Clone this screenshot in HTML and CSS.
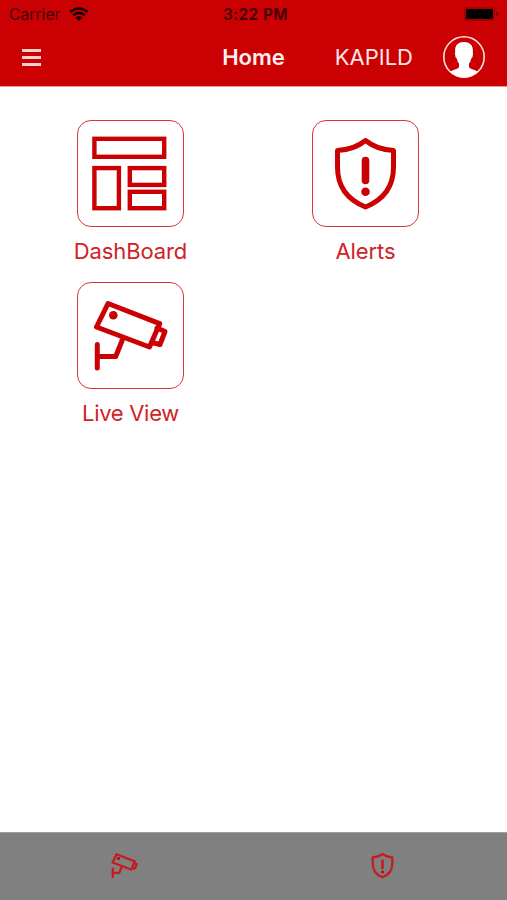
FILE: index.html
```html
<!DOCTYPE html>
<html lang="en">
<head>
    <meta charset="UTF-8">
    <meta name="viewport" content="width=device-width, initial-scale=1.0">
    <title>Home</title>
    <link rel="stylesheet" href="styles.css">
</head>

<body>
    <svg class="symbols">
        <symbol id="camera" viewBox="0 0 105 105">
            <path d="M30 20.5 81.7 40.700 71.500 64 18.500 44Z" />
            <path class="lens" d="M79 45 87 48.500 82 61.500 74 59.500" />
            <path d="M44.300 57 37.700 73.500H19.300M19.300 61.500V85" />
            <circle class="fill" cx="35.3" cy="32.3" r="4.3" />
        </symbol>
        <symbol id="shield" viewBox="0 0 105 105">
            <path d="M52.5 19.5C45 25.5 36 29 24.5 29.5V46C24.5 66 35 79 52.5 86C70 79 80.5 66 80.5 46V29.5C69 29 60 25.5 52.5 19.5Z" />
            <path class="mark" d="M52.5 39.5V59.5" />
            <circle class="fill" cx="52.5" cy="70.7" r="4.3" />
        </symbol>
    </svg>

    <header>
        <div class="status-bar">
            <div class="carrier">
                <span>Carrier</span>
                <svg class="wifi" viewBox="0 0 20 14">
                    <path d="M1.2 5Q10-2 18.8 5M4.2 8.2Q10 3.6 15.8 8.2" />
                    <path class="dot" d="M6.6 10.6Q10 8 13.4 10.6L10 14Z" />
                </svg>
            </div>
            <span class="time">3:22 PM</span>
            <div class="battery"><span></span></div>
        </div>
        <div class="nav-bar">
            <button class="menu" aria-label="Menu"><span></span><span></span><span></span></button>
            <h1>Home</h1>
            <div class="user">
                <span>KAPILD</span>
                <svg class="avatar" viewBox="0 0 42 42">
                    <circle cx="21" cy="21" r="20.2" />
                    <path d="M21 6C15 6 11.6 9.5 12.2 15.5L12 18Q12 21 13.7 22.5Q14.5 26 16 27.5V31C15 33.5 9.5 33.5 7 36A20 20 0 0 0 35 36C32.5 33.5 27 33.5 26 31V27.5Q27.5 26 28.3 22.5Q30 21 30 18L29.8 15.5C30.4 9.5 27 6 21 6Z" />
                </svg>
            </div>
        </div>
    </header>

    <main>
        <a class="tile">
            <span class="box">
                <svg class="icon square" viewBox="0 0 105 105">
                    <rect x="16.4" y="17.8" width="69.8" height="18" />
                    <rect x="16.4" y="47.1" width="24.5" height="40.1" />
                    <rect x="51.8" y="47.1" width="34.4" height="16.8" />
                    <rect x="51.8" y="70.8" width="34.4" height="16.4" />
                </svg>
            </span>
            <span class="label">DashBoard</span>
        </a>
        <a class="tile">
            <span class="box"><svg class="icon"><use href="#shield" /></svg></span>
            <span class="label">Alerts</span>
        </a>
        <a class="tile">
            <span class="box"><svg class="icon"><use href="#camera" /></svg></span>
            <span class="label live">Live View</span>
        </a>
    </main>

    <footer>
        <a><svg class="icon small"><use href="#camera" /></svg></a>
        <a><svg class="icon small"><use href="#shield" /></svg></a>
    </footer>
</body>
</html>
```
FILE: styles.css
```css
body {
    margin: 0;
    height: 100vh;
    display: flex;
    flex-direction: column;
    font-family: Inter, "Liberation Sans", sans-serif;
    background-color: #fff;
    color: #cb0003;
}

.symbols {
    position: absolute;
    width: 0;
    height: 0;
}

header {
    height: 87px;
    background-color: #cb0003;
    border-bottom: 1px solid #e69a9a;
    box-sizing: border-box;
}

.status-bar, .nav-bar {
    display: grid;
    grid-template-columns: 1fr auto 1fr;
    align-items: center;
}

.status-bar {
    height: 28px;
    padding: 0 8px 0 9px;
    font-size: 15.5px;
    color: #400000;
}

.carrier {
    display: flex;
    align-items: center;
    gap: 8px;
    letter-spacing: 0.1px;
}

.wifi {
    width: 20px;
    height: 14px;
    fill: none;
    stroke: #180000;
    stroke-width: 2.6;
}

.wifi .dot {
    fill: #180000;
    stroke: none;
}

.time {
    font-weight: 600;
    font-size: 15.5px;
    letter-spacing: 0.4px;
    padding-left: 3px;
}

.battery {
    position: relative;
    justify-self: end;
    width: 31px;
    height: 14px;
    padding: 2px;
    margin-right: 4px;
    border-radius: 3px;
    box-sizing: border-box;
    background-color: #a80002;
}

.battery span {
    display: block;
    height: 10px;
    background-color: #000;
}

.battery::after {
    content: "";
    position: absolute;
    right: -3px;
    top: 5px;
    width: 2px;
    height: 4px;
    background-color: #8c0002;
}

.nav-bar {
    height: 58px;
    padding: 0 22px;
    color: #fff;
}

.menu {
    width: 19px;
    padding: 0;
    border: none;
    background: none;
    display: grid;
    gap: 4px;
}

.menu span {
    height: 3px;
    background-color: #ffd0d0;
}

h1 {
    margin: 0;
    font-size: 22px;
    font-weight: 600;
    color: #fff0f0;
}

.user {
    display: flex;
    justify-content: flex-end;
    align-items: center;
    gap: 30px;
    font-size: 22px;
    color: #ffe6e6;
}

.avatar {
    width: 42px;
    height: 42px;
    margin-top: -1px;
    fill: #fff;
}

.avatar circle {
    fill: none;
    stroke: #ffdede;
    stroke-width: 1.6;
}

main {
    flex: 1;
    display: grid;
    grid-template-columns: 235px 235px;
    grid-auto-rows: 162px;
    align-content: start;
    padding: 33px 0 0 13px;
}

.tile {
    display: flex;
    flex-direction: column;
    align-items: center;
}

.box {
    width: 105px;
    height: 105px;
    border: 1px solid #d9353a;
    border-radius: 14px;
}

.icon {
    display: block;
    width: 105px;
    height: 105px;
    fill: none;
    stroke: #cb0003;
    stroke-width: 5;
    stroke-linejoin: round;
    stroke-linecap: round;
}

.icon.square {
    stroke-width: 4.4;
    stroke-linejoin: miter;
}

.fill {
    fill: #cb0003;
    stroke: none;
}

.mark {
    stroke-width: 7.6;
}

.label {
    margin-top: 11px;
    font-size: 22px;
    line-height: 27px;
    letter-spacing: -0.1px;
    color: #cf2227;
}

.label.live {
    letter-spacing: -0.3px;
}

footer {
    height: 68px;
    display: flex;
    justify-content: center;
    box-sizing: border-box;
    padding-bottom: 2px;
    overflow: hidden;
    background-color: #808080;
    border-top: 1px solid #a0a0a0;
}

footer a {
    flex: 0 0 258px;
    display: flex;
    justify-content: center;
    align-items: center;
}

.icon.small {
    width: 37px;
    height: 37px;
    stroke: #c41c21;
    stroke-width: 6.5;
}
```
